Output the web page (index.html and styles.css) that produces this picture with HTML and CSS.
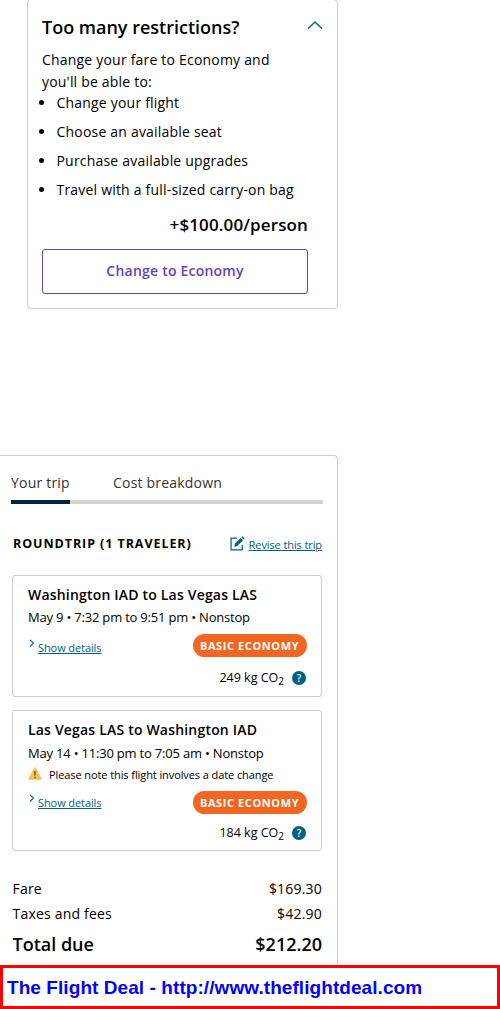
FILE: index.html
```html
<!DOCTYPE html>
<html lang="en">
<head>
<meta charset="utf-8">
<meta name="viewport" content="width=device-width, initial-scale=1.0">
<title>Trip summary</title>
<link rel="stylesheet" href="styles.css">
</head>
<body>
<section class="upgrade-card">
    <div class="upgrade-header">
        <h2>Too many restrictions?</h2>
        <svg class="chevron-up" width="16" height="10" viewBox="0 0 16 10"><path d="M1 8.700 8 2l7 6.700" fill="none" stroke="#016a8c" stroke-width="1.500"/></svg>
    </div>
    <p class="upgrade-text">Change your fare to Economy and<br>you'll be able to:</p>
    <ul class="benefits">
        <li>Change your flight</li>
        <li>Choose an available seat</li>
        <li>Purchase available upgrades</li>
        <li>Travel with a full-sized carry-on bag</li>
    </ul>
    <div class="upgrade-price">+$100.00/person</div>
    <button type="button" class="change-button">Change to Economy</button>
</section>

<section class="trip-card">
    <div class="tabs">
        <div class="tab active">Your trip</div>
        <div class="tab">Cost breakdown</div>
    </div>

    <div class="trip-header">
        <h3>ROUNDTRIP (1 TRAVELER)</h3>
        <a href="#" class="revise">
            <svg width="15" height="15" viewBox="0 0 15 15"><path d="M7 2.200H1.100v11.600h11.200V9" fill="none" stroke="#006080" stroke-width="1.200"/><path d="M4.300 10.800 5 7.600 10.700 1.900l2.400 2.300-5.800 5.800z" fill="#006080"/><path d="m11.400 1.200 1.100-1 2.100 2-1 1.200z" fill="#006080"/></svg>
            <span>Revise this trip</span>
        </a>
    </div>

    <div class="flight">
        <h4>Washington IAD to Las Vegas LAS</h4>
        <p class="times">May 9 • 7:32 pm to 9:51 pm • Nonstop</p>
        <div class="flight-row">
            <a href="#" class="details"><svg width="6" height="9" viewBox="0 0 6 9"><path d="m1 1 3.500 3L1 7.500" fill="none" stroke="#016a8c" stroke-width="1.100"/></svg><span>Show details</span></a>
            <span class="badge">BASIC ECONOMY</span>
        </div>
        <div class="emissions"><span>249 kg CO<sub>2</sub></span><i class="help">?</i></div>
    </div>

    <div class="flight flight-return">
        <h4>Las Vegas LAS to Washington IAD</h4>
        <p class="times">May 14 • 11:30 pm to 7:05 am • Nonstop</p>
        <p class="notice">
            <svg width="14" height="13" viewBox="0 0 14 13"><path d="M7 1.200 12.900 12H1.100z" fill="#fdbf57" stroke="#fdbf57" stroke-width="1.600" stroke-linejoin="round"/><path d="M7 4v4.500M7 9.700v1.500" stroke="#6b5b3e" stroke-width="1.500"/></svg>
            <span>Please note this flight involves a date change</span>
        </p>
        <div class="flight-row">
            <a href="#" class="details"><svg width="6" height="9" viewBox="0 0 6 9"><path d="m1 1 3.500 3L1 7.500" fill="none" stroke="#016a8c" stroke-width="1.100"/></svg><span>Show details</span></a>
            <span class="badge">BASIC ECONOMY</span>
        </div>
        <div class="emissions"><span>184 kg CO<sub>2</sub></span><i class="help">?</i></div>
    </div>

    <div class="fares">
        <div class="fare-row"><span>Fare</span><span>$169.30</span></div>
        <div class="fare-row"><span>Taxes and fees</span><span>$42.90</span></div>
        <div class="fare-row total"><span>Total due</span><span>$212.20</span></div>
    </div>
</section>

<footer class="credit">The Flight Deal - http://www.theflightdeal.com</footer>
</body>
</html>
```
FILE: styles.css
```css
* {
    box-sizing: border-box;
}

body {
    margin: 0;
    height: 1009px;
    display: flex;
    flex-direction: column;
    overflow: hidden;
    background: #fff;
    color: #000;
    font-family: "Open Sans", sans-serif;
    font-size: 14px;
    white-space: nowrap;
}

h2, h3, h4, p, ul {
    margin: 0;
    padding: 0;
}

a {
    color: #006080;
}

svg {
    display: block;
    flex: none;
}

/* fare upgrade */
.upgrade-card {
    width: 311px;
    height: 310px;
    margin: -1px 0 0 27px;
    padding: 14px 14px 0;
    border: 1px solid #ccc;
    border-radius: 4px;
    flex: none;
}

.upgrade-header {
    display: flex;
    justify-content: space-between;
    height: 35px;
}

.upgrade-header h2 {
    font-size: 18px;
    font-weight: 600;
    line-height: 26px;
}

.chevron-up {
    margin-top: 6px;
}

.upgrade-text {
    line-height: 22px;
    letter-spacing: 0.2px;
}

.benefits {
    margin-top: -1px;
    list-style: none;
}

.benefits li {
    display: flex;
    align-items: center;
    height: 21px;
    margin-bottom: 8px;
    letter-spacing: 0.2px;
}

.benefits li::before {
    content: "";
    width: 5px;
    height: 5px;
    margin: 0 12.5px 0 -3px;
    border-radius: 50%;
    background: #000;
}

.upgrade-price {
    margin-right: 15px;
    padding-top: 5px;
    height: 41px;
    line-height: 24px;
    font-size: 17px;
    font-weight: 600;
    letter-spacing: 0.13px;
    text-align: right;
}

.change-button {
    display: block;
    width: 266px;
    height: 45px;
    padding: 0 0 2px;
    border: 1px solid #6244bb;
    border-radius: 3px;
    background: #fff;
    color: #6244bb;
    font: 600 14px "Open Sans", sans-serif;
    letter-spacing: 0.22px;
}

/* trip summary */
.trip-card {
    width: 338px;
    height: 510px;
    margin-top: 146px;
    padding: 15px 15px 0 12px;
    border: 1px solid #ccc;
    border-left: 0;
    border-bottom: 0;
    border-radius: 0 4px 0 0;
    flex: none;
}

.tabs {
    display: flex;
    gap: 43px;
    height: 33px;
    margin: 0 -1px;
    border-bottom: 4px solid #d4d4ce;
    line-height: 24px;
    color: #333;
    letter-spacing: 0.2px;
}

.tab {
    height: 33px;
}

.tab.active {
    width: 59px;
    border-bottom: 4px solid #002244;
}

.trip-header {
    display: flex;
    justify-content: space-between;
    height: 71px;
    padding-top: 29px;
}

.trip-header h3 {
    padding-left: 1px;
    font-size: 12.5px;
    font-weight: 700;
    line-height: 22px;
    letter-spacing: 0.93px;
}

.revise {
    display: flex;
    gap: 4px;
    height: 20px;
    padding-top: 3px;
    font-size: 11px;
    line-height: 18px;
    letter-spacing: -0.1px;
}

.flight {
    height: 122px;
    margin-bottom: 13px;
    padding: 9px 14px 0 15px;
    border: 1px solid #ccc;
    border-radius: 3px;
}

.flight h4 {
    font-size: 14px;
    font-weight: 600;
    line-height: 20px;
    letter-spacing: 0.19px;
}

.times {
    font-size: 13px;
    line-height: 24px;
    letter-spacing: -0.2px;
}

.notice {
    display: flex;
    gap: 7px;
    height: 17px;
    font-size: 11px;
    line-height: 17px;
    letter-spacing: -0.09px;
}

.notice svg {
    margin-top: 1px;
}

.flight-row {
    display: flex;
    justify-content: space-between;
    height: 39px;
    padding-top: 5px;
}

.details {
    display: flex;
    gap: 3px;
    padding-top: 5px;
    font-size: 11px;
    line-height: 18px;
    letter-spacing: -0.09px;
}

.details svg {
    margin-left: 1px;
}

.badge {
    width: 114px;
    height: 23px;
    padding-right: 1px;
    border-radius: 12px;
    background: #f26522;
    color: #fff;
    font-size: 11px;
    font-weight: 700;
    line-height: 23px;
    letter-spacing: 0.6px;
    text-align: center;
}

.emissions {
    display: flex;
    justify-content: flex-end;
    align-items: center;
    gap: 8px;
    height: 20px;
    margin-right: 1px;
    font-size: 12.5px;
}

.emissions span {
    line-height: 20px;
}

.emissions sub {
    position: relative;
    top: -1px;
    font-size: 10px;
    line-height: 0;
}

.help {
    width: 14px;
    height: 14px;
    border-radius: 50%;
    background: #006080;
    color: #fff;
    font-size: 10px;
    font-style: normal;
    font-weight: 600;
    line-height: 14px;
    text-align: center;
}

.flight-return {
    height: 141px;
    margin-bottom: 25px;
}

.flight-return .times {
    line-height: 26px;
}

.flight-return .flight-row {
    height: 40px;
    padding-top: 8px;
}

.flight-return .details {
    padding-top: 3px;
}

.fare-row {
    display: flex;
    justify-content: space-between;
    padding-left: 0.5px;
    line-height: 25px;
    letter-spacing: 0.2px;
}

.fare-row.total {
    font-size: 18px;
    font-weight: 600;
    line-height: 36px;
    letter-spacing: 0;
}

.credit {
    height: 44px;
    padding-left: 4px;
    border: 3px solid #f00;
    color: #00f;
    font: bold 19px/39px "Liberation Sans", Arial, sans-serif;
    letter-spacing: 0.07px;
    flex: none;
}
```
